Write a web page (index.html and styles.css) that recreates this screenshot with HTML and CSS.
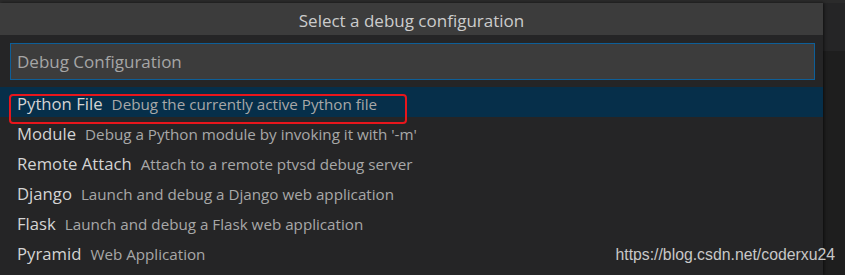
FILE: index.html
```html
<!DOCTYPE html>
<html lang="en">
<head>
<meta charset="UTF-8">
<title>Select a debug configuration</title>
<link rel="stylesheet" href="styles.css">
</head>
<body>

<div class="top-strip"></div>

<div class="workspace">
    <div class="quick-pick">
        <div class="qp-title">Select a debug configuration</div>
        <div class="qp-input-wrap">
            <input type="text" class="qp-input" placeholder="Debug Configuration">
        </div>
        <div class="qp-list">
            <div class="qp-item selected">
                <span class="qp-label">Python File</span>
                <span class="qp-desc">Debug the currently active Python file</span>
            </div>
            <div class="qp-item">
                <span class="qp-label">Module</span>
                <span class="qp-desc">Debug a Python module by invoking it with '-m'</span>
            </div>
            <div class="qp-item">
                <span class="qp-label">Remote Attach</span>
                <span class="qp-desc">Attach to a remote ptvsd debug server</span>
            </div>
            <div class="qp-item">
                <span class="qp-label">Django</span>
                <span class="qp-desc">Launch and debug a Django web application</span>
            </div>
            <div class="qp-item">
                <span class="qp-label">Flask</span>
                <span class="qp-desc">Launch and debug a Flask web application</span>
            </div>
            <div class="qp-item">
                <span class="qp-label">Pyramid</span>
                <span class="qp-desc">Web Application</span>
            </div>
        </div>
        <!-- marca vermelha da captura -->
        <div class="red-mark"></div>
    </div>
    <div class="side">
        <div class="side-head"></div>
    </div>
</div>

<div class="watermark">https://blog.csdn.net/coderxu24</div>

</body>
</html>
```

FILE: styles.css
```css
body {
    margin: 0;
    width: 845px;
    height: 275px;
    overflow: hidden;
    background: #1e1e1e;
    font-family: 'Open Sans', 'Noto Sans', sans-serif;
    position: relative;
}

.top-strip {
    height: 3px;
    background: #2b2b2b;
}

.workspace {
    display: flex;
    height: 272px;
}

.quick-pick {
    width: 823px;
    background: #252526;
    position: relative;
    box-shadow: 1px 0 3px rgba(0, 0, 0, 0.6);
    z-index: 1;
}

.qp-title {
    height: 32px;
    box-sizing: border-box;
    padding-top: 2px;
    line-height: 31px;
    background: #3c3c3c;
    color: #cccccc;
    text-align: center;
    font-size: 17px;
}

.qp-input-wrap {
    padding: 8px 8px 0 10px;
}

.qp-input {
    display: block;
    width: 100%;
    height: 37px;
    box-sizing: border-box;
    border: 1px solid #0e5f98;
    background: #3c3c3c;
    color: #cccccc;
    padding: 0 6px;
    font-family: 'Open Sans', 'Noto Sans', sans-serif;
    font-size: 17px;
    outline: none;
}

.qp-input::placeholder {
    color: #a6a6a6;
}

.qp-list {
    margin-top: 7px;
}

.qp-item {
    height: 30px;
    box-sizing: border-box;
    padding: 3px 0 0 17px;
    display: flex;
    align-items: center;
    white-space: nowrap;
}

.qp-item.selected {
    background: #062f4a;
}

.qp-label {
    font-size: 16.7px;
    color: #d4d4d4;
    margin-right: 9px;
}

.qp-desc {
    font-size: 15.2px;
    color: #a8a8a8;
}

.red-mark {
    position: absolute;
    left: 9px;
    top: 91px;
    width: 394px;
    height: 26px;
    border: 2px solid #e8161c;
    border-radius: 4px;
}

.side {
    flex: 1;
}

.side-head {
    height: 48px;
    background: #252526;
}

.watermark {
    position: absolute;
    right: 10px;
    top: 246px;
    font-family: 'Liberation Sans', Arial, sans-serif;
    font-size: 15.8px;
    color: #c8c8c8;
    z-index: 2;
}
```
